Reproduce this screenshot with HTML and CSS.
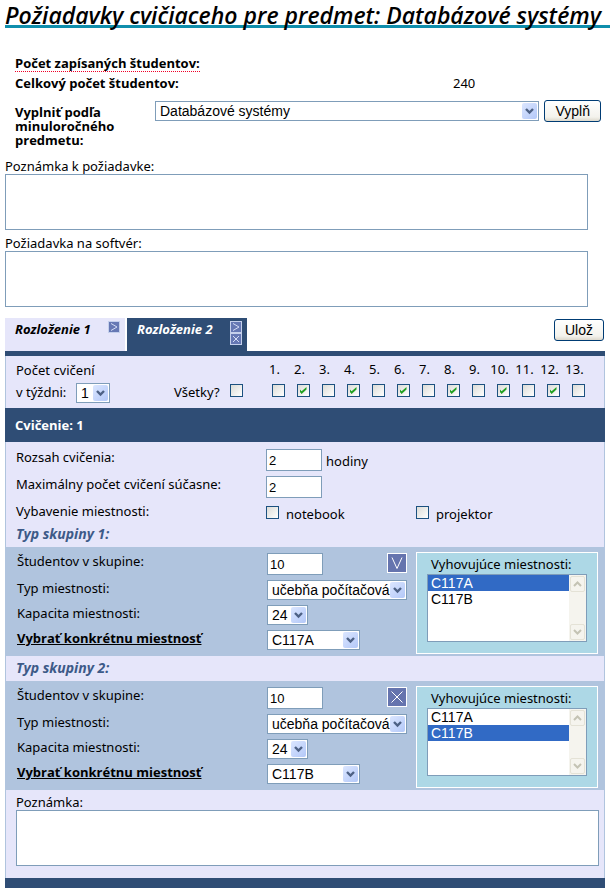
FILE: index.html
```html
<!DOCTYPE html>
<html lang="sk">
<head>
<meta charset="utf-8">
<title>Požiadavky cvičiaceho</title>
<link rel="stylesheet" href="styles.css">
</head>
<body>
<svg class="symbols" aria-hidden="true">
  <symbol id="chevron" viewBox="0 0 15 16"><path d="M4 6l3.500 3.500L11 6" fill="none" stroke="#4d6185" stroke-width="2.400"/></symbol>
  <symbol id="up" viewBox="0 0 13 14"><path d="M3 9l3.500-3.500L10 9" fill="none" stroke="#c4c3b4" stroke-width="2"/></symbol>
  <symbol id="down" viewBox="0 0 13 14"><path d="M3 5l3.500 3.500L10 5" fill="none" stroke="#c4c3b4" stroke-width="2"/></symbol>
  <symbol id="next" viewBox="0 0 10 10"><path d="M2 1.500L8 5L2 8.500" fill="none" stroke="#d4dcf4"/></symbol>
  <symbol id="close" viewBox="0 0 10 10"><path d="M2 2l6 6M8 2l-6 6" fill="none" stroke="#d4dcf4"/></symbol>
  <symbol id="vee" viewBox="0 0 18 18"><path d="M4 3.500l5 11l5-11" fill="none" stroke="#fff"/></symbol>
  <symbol id="cross" viewBox="0 0 18 18"><path d="M3.500 3.500l11 11M14.500 3.500l-11 11" fill="none" stroke="#fff"/></symbol>
</svg>
<form class="page">
  <h1>Požiadavky cvičiaceho pre predmet: Databázové systémy</h1>

  <div class="summary">
    <div class="line"><span class="dotted">Počet zapísaných študentov:</span></div>
    <div class="line"><span class="name">Celkový počet študentov:</span><span>240</span></div>
  </div>

  <div class="fill">
    <label class="fill-label" for="subject">Vyplniť podľa minuloročného predmetu:</label>
    <span class="drop wide"><select id="subject"><option>Databázové systémy</option></select><svg><use href="#chevron"/></svg></span>
    <button type="button" class="push">Vyplň</button>
  </div>

  <div class="note">
    <label for="note">Poznámka k požiadavke:</label>
    <textarea id="note"></textarea>
  </div>
  <div class="note">
    <label for="software">Požiadavka na softvér:</label>
    <textarea id="software"></textarea>
  </div>

  <div class="tabs">
    <div class="tab"><a href="#layout">Rozloženie 1</a>
      <span class="tools"><button type="button" class="mini" aria-label="Presunúť"><svg><use href="#next"/></svg></button></span></div>
    <div class="tab active"><a href="#layout">Rozloženie 2</a>
      <span class="tools"><button type="button" class="mini" aria-label="Presunúť"><svg><use href="#next"/></svg></button><button type="button" class="mini" aria-label="Zrušiť"><svg><use href="#close"/></svg></button></span></div>
    <button type="submit" class="push save">Ulož</button>
  </div>

  <div class="panel" id="layout">
    <div class="weeks">
      <div class="count">
        <label for="count">Počet cvičení<br>v týždni:</label>
        <span class="drop"><select id="count"><option>1</option></select><svg><use href="#chevron"/></svg></span>
      </div>
      <label class="all">Všetky? <input type="checkbox"></label>
      <div class="week-list">
        <label>1.<input type="checkbox"></label>
        <label>2.<input type="checkbox" checked></label>
        <label>3.<input type="checkbox"></label>
        <label>4.<input type="checkbox" checked></label>
        <label>5.<input type="checkbox"></label>
        <label>6.<input type="checkbox" checked></label>
        <label>7.<input type="checkbox"></label>
        <label>8.<input type="checkbox" checked></label>
        <label>9.<input type="checkbox"></label>
        <label>10.<input type="checkbox" checked></label>
        <label>11.<input type="checkbox"></label>
        <label>12.<input type="checkbox" checked></label>
        <label>13.<input type="checkbox"></label>
      </div>
    </div>

    <h2>Cvičenie: 1</h2>

    <div class="basics">
      <div class="row"><label class="caption" for="hours">Rozsah cvičenia:</label><input id="hours" class="num" type="text" value="2"><span class="unit">hodiny</span></div>
      <div class="row"><label class="caption" for="max">Maximálny počet cvičení súčasne:</label><input id="max" class="num" type="text" value="2"></div>
      <div class="row equip"><span class="caption">Vybavenie miestnosti:</span><label class="check"><input type="checkbox"> notebook</label><label class="check"><input type="checkbox"> projektor</label></div>
    </div>

    <h3>Typ skupiny 1:</h3>
    <div class="group">
      <div class="fields">
        <label for="s1">Študentov v skupine:</label>
        <div class="split"><input id="s1" class="num" type="text" value="10"><button type="button" class="tool" aria-label="Rozbaliť"><svg><use href="#vee"/></svg></button></div>
        <label for="t1">Typ miestnosti:</label>
        <span class="drop kind"><select id="t1"><option>učebňa počítačová</option></select><svg><use href="#chevron"/></svg></span>
        <label for="k1">Kapacita miestnosti:</label>
        <span class="drop cap"><select id="k1"><option>24</option></select><svg><use href="#chevron"/></svg></span>
        <a href="#r1">Vybrať konkrétnu miestnosť</a>
        <span class="drop room"><select id="r1" aria-label="Miestnosť"><option>C117A</option></select><svg><use href="#chevron"/></svg></span>
      </div>
      <div class="rooms">
        <label for="l1">Vyhovujúce miestnosti:</label>
        <div class="list"><select id="l1" size="4"><option selected>C117A</option><option>C117B</option></select><div class="bar"><svg><use href="#up"/></svg><svg><use href="#down"/></svg></div></div>
      </div>
    </div>

    <h3>Typ skupiny 2:</h3>
    <div class="group">
      <div class="fields">
        <label for="s2">Študentov v skupine:</label>
        <div class="split"><input id="s2" class="num" type="text" value="10"><button type="button" class="tool" aria-label="Zrušiť"><svg><use href="#cross"/></svg></button></div>
        <label for="t2">Typ miestnosti:</label>
        <span class="drop kind"><select id="t2"><option>učebňa počítačová</option></select><svg><use href="#chevron"/></svg></span>
        <label for="k2">Kapacita miestnosti:</label>
        <span class="drop cap"><select id="k2"><option>24</option></select><svg><use href="#chevron"/></svg></span>
        <a href="#r2">Vybrať konkrétnu miestnosť</a>
        <span class="drop room"><select id="r2" aria-label="Miestnosť"><option>C117B</option></select><svg><use href="#chevron"/></svg></span>
      </div>
      <div class="rooms">
        <label for="l2">Vyhovujúce miestnosti:</label>
        <div class="list"><select id="l2" size="4"><option>C117A</option><option selected>C117B</option></select><div class="bar"><svg><use href="#up"/></svg><svg><use href="#down"/></svg></div></div>
      </div>
    </div>

    <div class="remark">
      <label for="remark">Poznámka:</label>
      <textarea id="remark"></textarea>
    </div>
  </div>
</form>
</body>
</html>
```

FILE: styles.css
```css
* { box-sizing: border-box; }

body {
  margin: 0;
  background: #fff;
  color: #000;
  font: 13px/16px "Noto Sans", "Open Sans", sans-serif;
}

.symbols { display: none; }

.page { padding: 0 5px; }

h1, h2, h3 { margin: 0; }

h1, h2, h3, .dotted, .name, .fill-label, .tab a, .fields a {
  font-family: "Open Sans", "Noto Sans", sans-serif;
}

h1 {
  height: 28px;
  margin-right: -5px;
  border-bottom: 3px solid #0f8eac;
  font-size: 23px;
  line-height: 31px;
  font-style: italic;
  font-weight: 600;
  white-space: nowrap;
}

input, select, textarea, button {
  margin: 0;
  border-radius: 0;
  color: #000;
  font: 14px/16px "Liberation Sans", sans-serif;
}

input[type="text"], select, textarea {
  border: 1px solid #7f9db9;
  background: #fff;
}

textarea {
  display: block;
  width: 100%;
  height: 56px;
  resize: none;
}

.num { width: 56px; height: 22px; padding: 2px; font-size: 13px; }

input[type="checkbox"] {
  display: grid;
  place-content: center;
  appearance: none;
  width: 13px;
  height: 13px;
  border: 1px solid #1c5180;
  background: linear-gradient(135deg, #dcdcd7, #fff);
}

input[type="checkbox"]:checked::before {
  content: "";
  width: 7px;
  height: 7px;
  background: #21a121;
  clip-path: polygon(0 28%, 0 64%, 30% 100%, 100% 36%, 100% 0, 30% 62%);
}

.drop { display: block; position: relative; }

.drop select {
  display: block;
  appearance: none;
  width: 100%;
  height: 20px;
  padding: 0 4px;
}

.drop svg {
  position: absolute;
  top: 2px;
  right: 2px;
  width: 15px;
  height: 16px;
  border-radius: 2px;
  background: linear-gradient(135deg, #dbe6ff, #b3c8f8);
  pointer-events: none;
}

.push {
  height: 22px;
  padding: 0 10px;
  border: 1px solid #003c74;
  border-radius: 3px;
  background: linear-gradient(#fff, #f3f2ec 80%, #dcd8cc);
}

.summary { padding: 26px 10px 0; }

.line { display: flex; height: 19px; align-items: center; }
.line .dotted { border-bottom: 1px dotted #f00028; font-weight: 700; }
.line .name { width: 438px; font-weight: 700; }

.fill {
  display: flex;
  gap: 5px;
  margin: 8px 4px 0 10px;
}

.fill-label {
  width: 135px;
  padding: 5px 35px 0 0;
  font-weight: 700;
  line-height: 14px;
}

.wide { flex: 1; margin-top: 1px; }

.note { margin-right: 17px; padding-top: 5px; }
.note label, .remark label { display: block; }
.fill + .note { padding-top: 11px; }

.tabs { display: flex; gap: 2px; margin-top: 11px; height: 33px; }

.tab {
  display: flex;
  justify-content: space-between;
  width: 120px;
  padding: 3px 5px 0 10px;
  background: #e6e6fa;
}

.tab a {
  color: #000;
  font-size: 13px;
  font-weight: 700;
  font-style: italic;
  text-decoration: none;
}

.tab.active { background: #2f4d75; }
.tab.active a { color: #fff; }
.tools { display: flex; flex-direction: column; }

.mini {
  width: 12px;
  height: 12px;
  padding: 0;
  border: 1px solid #c5d0ec;
  background: #6678b4;
}
.mini svg { display: block; width: 10px; height: 10px; }

.save { margin: 1px 1px 0 auto; }

.panel {
  border-top: 5px solid #2f4d75;
  border-bottom: 10px solid #2f4d75;
  background: #e6e6fa;
}

.weeks, .basics, h3, .group, .remark {
  border: 0 solid #b0c4de;
  border-width: 0 1px;
}

.weeks { display: flex; height: 52px; padding: 3px 0 0 10px; }

.count { display: flex; width: 158px; align-items: flex-end; padding-bottom: 5px; gap: 5px; }
.count label { width: 55px; line-height: 22px; white-space: nowrap; }
.count .drop { width: 34px; }

.all { display: flex; flex: none; width: 88px; justify-content: space-between; padding: 25px 19px 0 0; }

.week-list { display: grid; flex: none; grid-template-columns: repeat(13, 25px); padding-top: 2px; }
.week-list label { display: flex; flex-direction: column; align-items: center; gap: 7px; }
.week-list input { margin-left: 7px; }

h2 {
  padding: 9px 10px;
  background: #2f4d75;
  color: #fff;
  font-size: 13px;
  line-height: 16px;
}

.basics { padding: 7px 0 0 10px; }
.row { display: flex; height: 27px; }
.caption { width: 250px; }
.row.equip { height: 19px; }
.unit { padding: 4px; }
.check { display: flex; gap: 7px; width: 150px; padding-top: 3px; }

h3 {
  height: 25px;
  padding: 4px 10px;
  color: #3d5a88;
  font-size: 14px;
  line-height: 16px;
  font-style: italic;
}

.group {
  display: flex;
  gap: 9px;
  padding: 5px 6px 2px 11px;
  background: #b0c4de;
}

.fields {
  display: grid;
  flex: 1;
  grid-template-columns: 250px 1fr;
  grid-template-rows: 27px 25px 25px 20px;
  padding-top: 1px;
}

.fields a { color: #000; font-weight: 700; text-decoration: underline; }
.split { display: flex; justify-content: space-between; }

.tool {
  width: 20px;
  height: 20px;
  padding: 0;
  border: 1px solid #fff;
  background: #6574ae;
}
.tool svg { display: block; width: 18px; height: 18px; }

.cap { width: 41px; }
.room { width: 93px; }

.rooms {
  width: 182px;
  height: 102px;
  padding: 3px 10px;
  border: 1px solid #fff;
  background: #add8e6;
}

.rooms label { display: block; padding: 0 4px 2px; white-space: nowrap; }

.list {
  display: flex;
  height: 68px;
  border: 1px solid #7f9db9;
  background: #fff;
}

.list select {
  flex: 1;
  overflow: hidden;
  border: 0;
  padding: 0;
  outline: none;
}

.list option { height: 16px; min-height: 16px; padding: 0 3px; line-height: 16px; }
.list option:checked { background: #316ac5 linear-gradient(#316ac5, #316ac5); color: #fff; }

.bar {
  display: flex;
  flex-direction: column;
  justify-content: space-between;
  width: 17px;
  padding: 1px;
  background: #f5f4ee;
}
.bar svg { width: 15px; height: 16px; border: 1px solid #e4e2d6; border-radius: 2px; }

.remark { padding: 4px 5px 12px 10px; }
```
